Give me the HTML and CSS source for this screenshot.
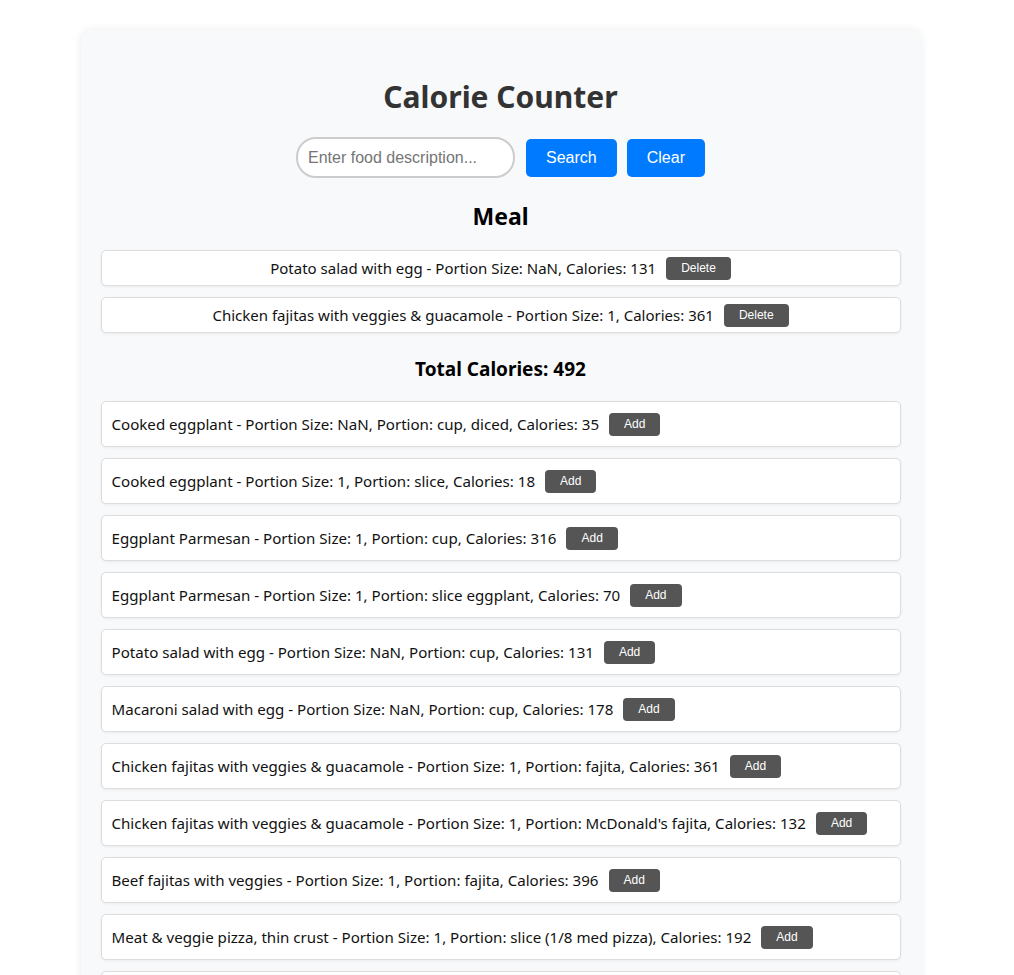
FILE: index.html
```html
<!DOCTYPE html>
<html lang="en">
<head>
<meta charset="utf-8">
<title>Calorie Counter</title>
<link rel="stylesheet" href="styles.css">
</head>
<body>
<div class="container">
  <h1 class="title">Calorie Counter</h1>
  <div class="search-row">
    <input class="search-input" type="text" placeholder="Enter food description...">
    <button class="btn-primary">Search</button>
    <button class="btn-primary">Clear</button>
  </div>
  <h2 class="meal-title">Meal</h2>
  <div class="meal-list">
    <div class="meal-item"><span>Potato salad with egg - Portion Size: NaN, Calories: 131</span><button class="btn-small">Delete</button></div>
    <div class="meal-item"><span>Chicken fajitas with veggies &amp; guacamole - Portion Size: 1, Calories: 361</span><button class="btn-small">Delete</button></div>
  </div>
  <h3 class="total">Total Calories: 492</h3>
  <div class="food-list">
    <div class="food-item"><span>Cooked eggplant - Portion Size: NaN, Portion: cup, diced, Calories: 35</span><button class="btn-small">Add</button></div>
    <div class="food-item"><span>Cooked eggplant - Portion Size: 1, Portion: slice, Calories: 18</span><button class="btn-small">Add</button></div>
    <div class="food-item"><span>Eggplant Parmesan - Portion Size: 1, Portion: cup, Calories: 316</span><button class="btn-small">Add</button></div>
    <div class="food-item"><span>Eggplant Parmesan - Portion Size: 1, Portion: slice eggplant, Calories: 70</span><button class="btn-small">Add</button></div>
    <div class="food-item"><span>Potato salad with egg - Portion Size: NaN, Portion: cup, Calories: 131</span><button class="btn-small">Add</button></div>
    <div class="food-item"><span>Macaroni salad with egg - Portion Size: NaN, Portion: cup, Calories: 178</span><button class="btn-small">Add</button></div>
    <div class="food-item"><span>Chicken fajitas with veggies &amp; guacamole - Portion Size: 1, Portion: fajita, Calories: 361</span><button class="btn-small">Add</button></div>
    <div class="food-item"><span>Chicken fajitas with veggies &amp; guacamole - Portion Size: 1, Portion: McDonald's fajita, Calories: 132</span><button class="btn-small">Add</button></div>
    <div class="food-item"><span>Beef fajitas with veggies - Portion Size: 1, Portion: fajita, Calories: 396</span><button class="btn-small">Add</button></div>
    <div class="food-item"><span>Meat &amp; veggie pizza, thin crust - Portion Size: 1, Portion: slice (1/8 med pizza), Calories: 192</span><button class="btn-small">Add</button></div>
    <div class="food-item"><span>Meat &amp; veggie pizza, thick crust - Portion Size: 1, Portion: slice (1/8 med pizza), Calories: 245</span><button class="btn-small">Add</button></div>
    <div class="food-item"><span>Chicken salad with egg - Portion Size: 1, Portion: cup, Calories: 402</span><button class="btn-small">Add</button></div>
  </div>
</div>
</body>
</html>
```

FILE: styles.css
```css
html, body {
  background: #ffffff;
}
body {
  margin: 0;
  padding: 30px 13px 20px 0;
  font-family: "Noto Sans", "Open Sans", sans-serif;
  color: #111;
}
.container {
  width: 800px;
  margin: 0 auto;
  padding: 20px;
  background: #f8f9fa;
  border-radius: 10px;
  box-shadow: 0 0 10px rgba(0, 0, 0, 0.08);
}
.title {
  margin: 27px 0 20px;
  font-size: 30px;
  line-height: 40px;
  font-weight: 700;
  color: #333;
  text-align: center;
}
.search-row {
  display: flex;
  justify-content: center;
  align-items: center;
  gap: 10px;
}
.search-input {
  box-sizing: border-box;
  width: 219px;
  height: 41px;
  margin-right: 1px;
  padding: 10px;
  border: 2px solid #ccc;
  border-radius: 20px;
  font-family: "Liberation Sans", Arial, sans-serif;
  font-size: 16px;
  background: #fff;
  outline: none;
}
.search-input::placeholder {
  color: #757575;
}
.btn-primary {
  height: 38px;
  padding: 0 20px;
  border: none;
  border-radius: 5px;
  background: #007bff;
  color: #fff;
  font-family: "Liberation Sans", Arial, sans-serif;
  font-size: 16px;
}
.meal-title {
  margin: 23px 0 19px;
  font-size: 23px;
  line-height: 30px;
  font-weight: 700;
  text-align: center;
  color: #000;
}
.meal-item {
  display: flex;
  align-items: center;
  justify-content: center;
  box-sizing: border-box;
  height: 36px;
  margin-bottom: 11px;
  padding: 0 10px;
  background: #fff;
  border: 1px solid #ddd;
  border-radius: 5px;
  box-shadow: 0 1px 3px rgba(0, 0, 0, 0.06);
  font-size: 15px;
}
.total {
  margin: 23px 0 0;
  font-size: 19px;
  line-height: 26px;
  font-weight: 700;
  text-align: center;
  color: #000;
}
.food-list {
  margin-top: 19px;
}
.food-item {
  display: flex;
  align-items: center;
  box-sizing: border-box;
  height: 46px;
  margin-bottom: 11px;
  padding: 0 10px;
  background: #fff;
  border: 1px solid #ddd;
  border-radius: 5px;
  box-shadow: 0 1px 3px rgba(0, 0, 0, 0.06);
  font-size: 15.1px;
}
.btn-small {
  flex: none;
  margin-left: 10px;
  height: 23px;
  padding: 0 15px;
  border: none;
  border-radius: 4px;
  background: #555;
  color: #fff;
  font-family: "Liberation Sans", Arial, sans-serif;
  font-size: 12px;
}
```
